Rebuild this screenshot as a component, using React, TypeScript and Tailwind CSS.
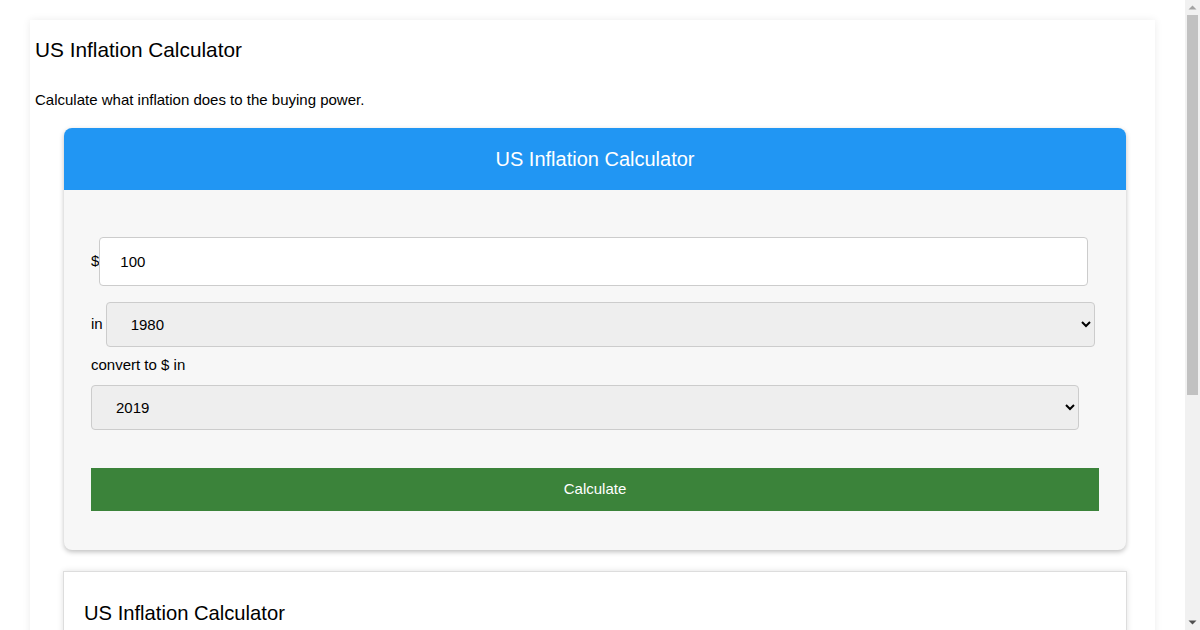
export default function App() {
  const years = ['1980', '1990', '2000', '2010', '2019'];
  return (
    <div className="relative h-[630px] overflow-hidden bg-white font-['Liberation_Sans',Arial,sans-serif] text-black">
      <div className="pt-5 pb-10">
        <div className="ml-[30px] w-[1125px] bg-white px-[5px] pt-[17px] pb-6 shadow-[0_0_8px_rgba(0,0,0,0.08)]">
          <h1 className="text-[20.8px] leading-[26px]">US Inflation Calculator</h1>
          <p className="mt-[28px] text-[15px] leading-[18px]">Calculate what inflation does to the buying power.</p>

          <div className="ml-[29px] mt-[19px] w-[1062px] overflow-hidden rounded-lg bg-[#f7f7f7] shadow-[0_2px_5px_rgba(0,0,0,0.25)]">
            <div className="flex h-[62px] items-center justify-center bg-[#2196f3] text-[20px] text-white">
              US Inflation Calculator
            </div>
            <div className="px-[27px] pt-[47px] pb-[39px] text-[15px]">
              <div className="flex items-center">
                <span>$</span>
                <input
                  defaultValue="100"
                  className="h-[49px] w-[989px] rounded border border-[#ccc] bg-white px-5 text-[15px] outline-none"
                />
              </div>
              <div className="mt-4 flex items-center">
                <span className="mr-[3px]">in</span>
                <select
                  defaultValue="1980"
                  className="h-[45px] w-[989px] rounded border border-[#ccc] bg-[#eee] px-[20px] text-[15px] outline-none"
                >
                  {years.map((y) => (
                    <option key={y}>{y}</option>
                  ))}
                </select>
              </div>
              <div className="mt-[9px] leading-[18px]">convert to $ in</div>
              <select
                defaultValue="2019"
                className="mt-[11px] h-[45px] w-[988px] rounded border border-[#ccc] bg-[#eee] px-[20px] text-[15px] outline-none"
              >
                {years.map((y) => (
                  <option key={y}>{y}</option>
                ))}
              </select>
              <button className="mt-[38px] h-[43px] w-[1008px] bg-[#3b833a] text-[15px] text-white">
                Calculate
              </button>
            </div>
          </div>

          <div className="ml-[28px] mt-[21px] h-[300px] w-[1064px] border border-[#ddd] bg-white px-5 pt-[28px] shadow-[0_0_6px_rgba(0,0,0,0.12)]">
            <h2 className="text-[20.2px] leading-[26px]">US Inflation Calculator</h2>
          </div>
        </div>
      </div>

      {/* browser scrollbar */}
      <div className="absolute top-0 right-0 flex h-[630px] w-[15px] flex-col items-center bg-[#f1f1f1]">
        <svg width="15" height="15" viewBox="0 0 15 15">
          <path d="M3.5 9.5 L7.5 5.5 L11.5 9.5 Z" fill="#a3a3a3" />
        </svg>
        <div className="h-[380px] w-[11px] bg-[#c1c1c1]" />
        <div className="flex-1" />
        <svg width="15" height="15" viewBox="0 0 15 15">
          <path d="M3.5 5.5 L11.5 5.5 L7.5 9.5 Z" fill="#505050" />
        </svg>
      </div>
    </div>
  );
}
